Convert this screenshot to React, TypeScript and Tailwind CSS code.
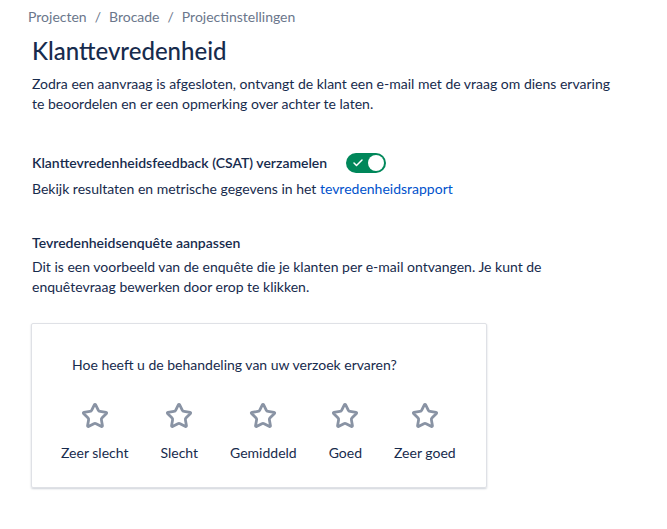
import { Star, Check } from "lucide-react";

const ratings = ["Zeer slecht", "Slecht", "Gemiddeld", "Goed", "Zeer goed"];

export default function App() {
  return (
    <div
      className="min-h-[529px] bg-white text-[#172b4d] px-8 pt-[7px]"
      style={{ fontFamily: 'Lato, sans-serif' }}
    >
      <nav className="-ml-1 flex items-center gap-2 text-[14px] leading-5 text-[#6b778c]">
        <span>Projecten</span>
        <span>/</span>
        <span>Brocade</span>
        <span>/</span>
        <span>Projectinstellingen</span>
      </nav>

      <h1 className="mt-[10px] text-[24px] leading-7 font-medium">Klanttevredenheid</h1>

      <p className="mt-[9px] text-[14px] leading-5 max-w-[590px]">
        Zodra een aanvraag is afgesloten, ontvangt de klant een e-mail met de vraag om diens ervaring te
        beoordelen en er een opmerking over achter te laten.
      </p>

      <div className="mt-[39px] flex items-center gap-[19px]">
        <span className="text-[14px] leading-5 font-semibold">Klanttevredenheidsfeedback (CSAT) verzamelen</span>
        <div className="flex h-5 w-10 items-center justify-between rounded-full bg-[#00875a] pl-[6px] pr-[2px]">
          <Check className="h-3 w-3 text-white" strokeWidth={3} />
          <span className="h-4 w-4 rounded-full bg-white" />
        </div>
      </div>
      <p className="mt-[6px] text-[14px] leading-5">
        Bekijk resultaten en metrische gegevens in het{" "}
        <a className="text-[#0052cc]">tevredenheidsrapport</a>
      </p>

      <h2 className="mt-[34px] text-[14px] leading-5 font-semibold">Tevredenheidsenquête aanpassen</h2>
      <p className="mt-1 text-[14px] leading-5 max-w-[530px]">
        Dit is een voorbeeld van de enquête die je klanten per e-mail ontvangen. Je kunt de enquêtevraag
        bewerken door erop te klikken.
      </p>

      <div className="mt-[26px] -ml-px w-[456px] h-[165px] border border-[#dfe1e6] rounded-[2px] shadow-[0_1px_2px_rgba(9,30,66,0.2)] px-[40px] pt-[31px]">
        <p className="text-[14px] leading-5">Hoe heeft u de behandeling van uw verzoek ervaren?</p>
        <div className="mt-[27px] -ml-[11px] flex gap-8">
          {ratings.map((r) => (
            <div key={r} className="flex flex-col items-center">
              <Star className="h-7 w-7 text-[#8993a4]" strokeWidth={2.4} />
              <span className="mt-[13px] whitespace-nowrap text-[14px] leading-5">{r}</span>
            </div>
          ))}
        </div>
      </div>
    </div>
  );
}
